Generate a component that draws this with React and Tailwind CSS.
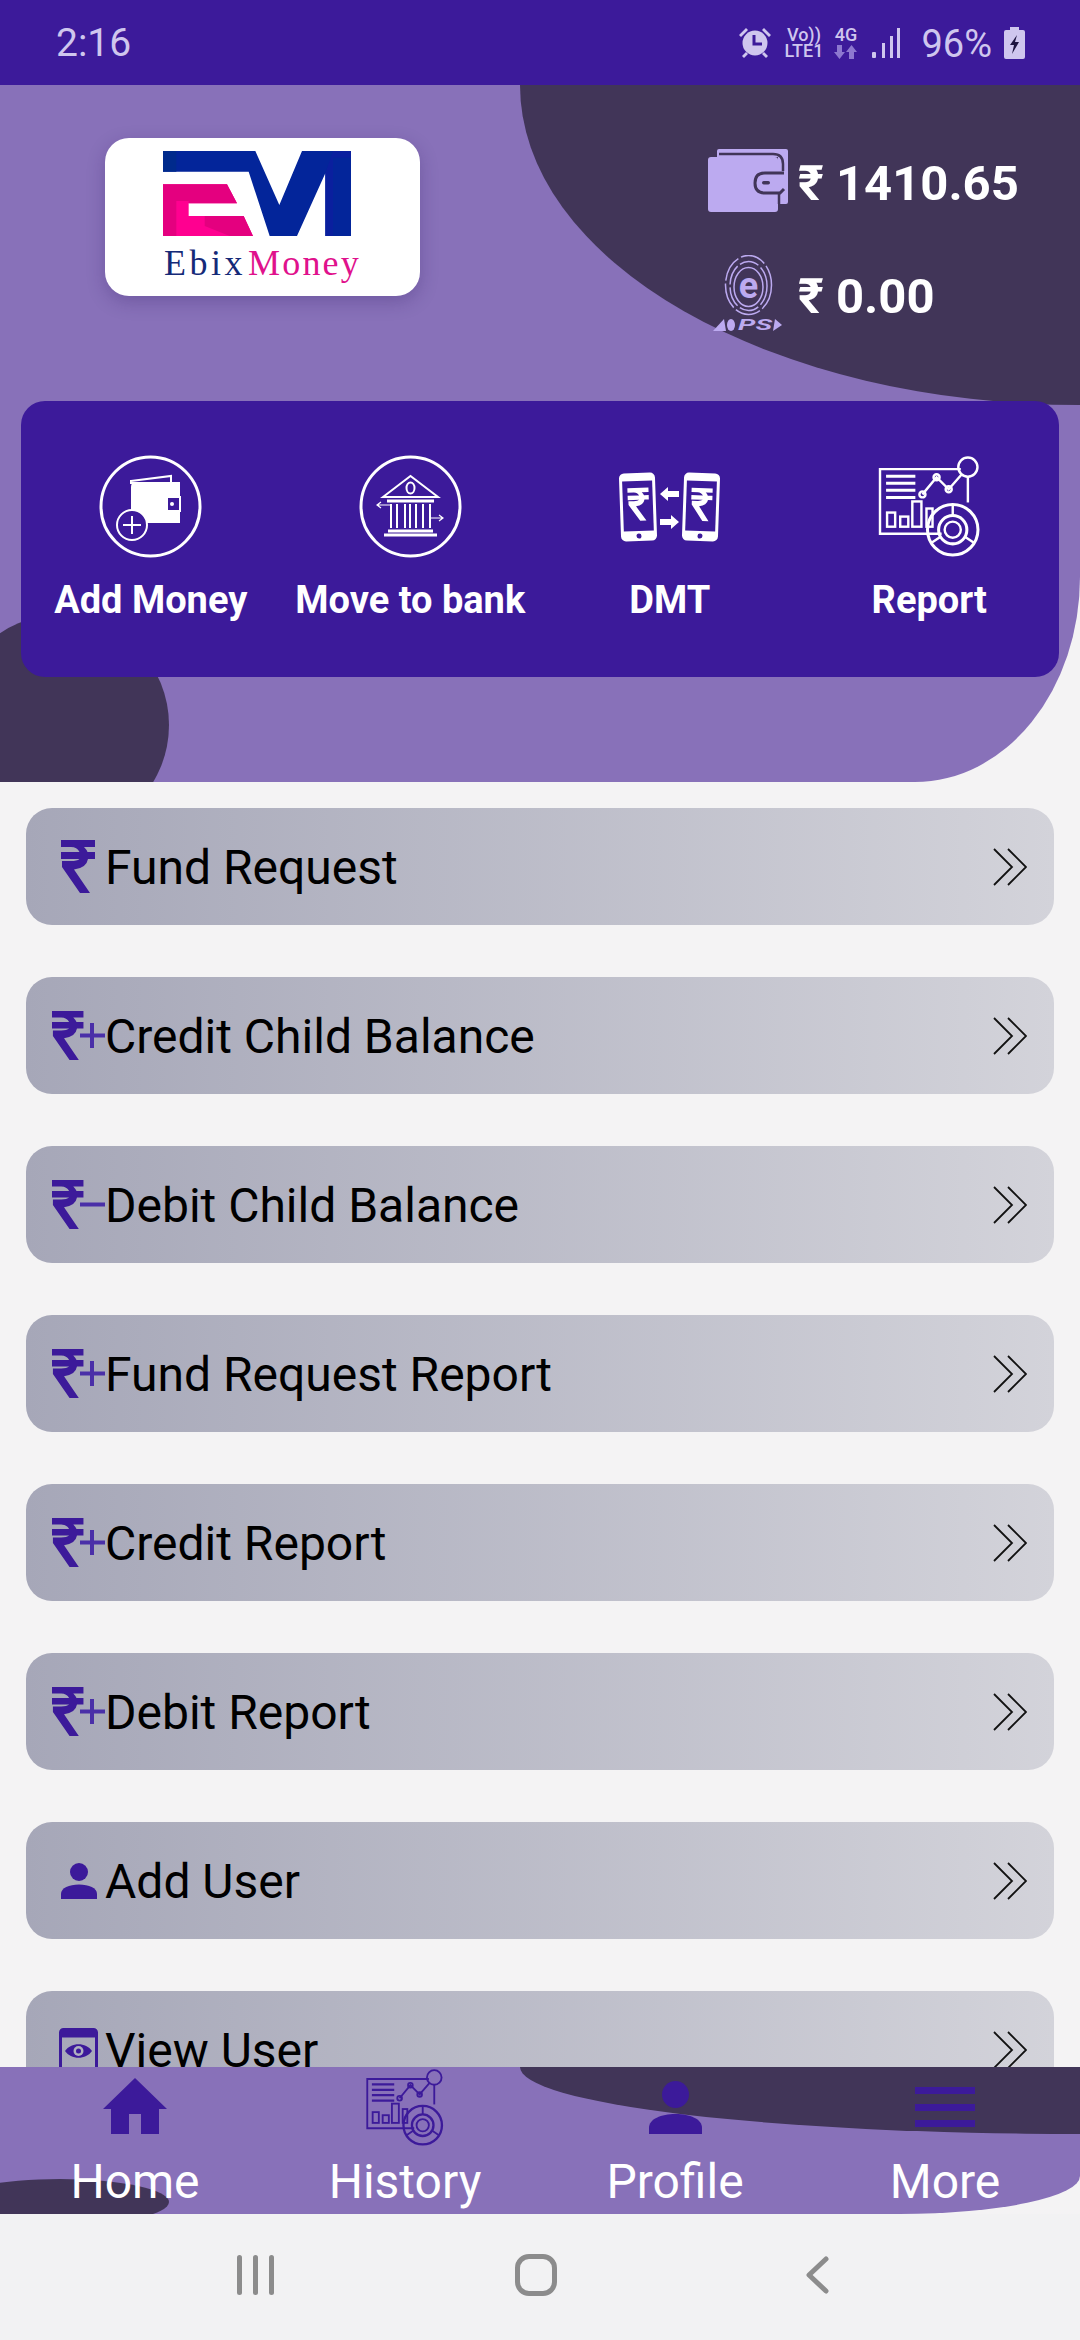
import React from "react";

const RUPEE = "M0 0H34V7H23Q25.5 9.5 26.5 12H34V19H27Q25.5 28 13 29.5L29 53H19L1 27V21H10Q16 21 18.5 19H0V12H18.5Q16 7 10 7H0Z";

const Rupee = ({ className }) => (
  <svg viewBox="0 0 34 53" className={className} fill="currentColor">
    <path d={RUPEE} />
  </svg>
);

const RupeeSign = ({ sign }) => (
  <svg viewBox="0 0 53 49" className="w-[53px] h-[49px] ml-[26px] text-[#3c1a9a]">
    <g transform="scale(0.925)" fill="currentColor">
      <path d={RUPEE} />
    </g>
    <path d="M28 24.5H53" stroke="#4a2fa8" strokeWidth="4" fill="none" />
    {sign === "+" && <path d="M40 12V37" stroke="#4a2fa8" strokeWidth="4" fill="none" />}
  </svg>
);

const FundIcon = () => (
  <div className="w-[81px] flex justify-end pr-[12px]">
    <Rupee className="w-[34px] h-[53px] text-[#3c1a9a]" />
  </div>
);

const SignIcon = ({ sign }) => (
  <div className="w-[81px]">
    <RupeeSign sign={sign} />
  </div>
);

const UserIcon = () => (
  <div className="w-[81px] flex justify-end pr-[10px]">
    <svg viewBox="0 0 36 36" className="w-[36px] h-[36px]" fill="#3c1a9a">
      <circle cx="18" cy="9" r="9" />
      <path d="M0 36V31C0 25 8 21.500 18 21.500S36 25 36 31V36Z" />
    </svg>
  </div>
);

const EyeIcon = () => (
  <div className="w-[81px] flex justify-end pr-[9px]">
    <svg viewBox="0 0 39 44" className="w-[39px] h-[44px]">
      <rect x="1.500" y="1.500" width="36" height="41" rx="3" fill="none" stroke="#3c1a9a" strokeWidth="3" />
      <rect x="1.500" y="1.500" width="36" height="8" rx="2" fill="#3c1a9a" />
      <path d="M6 23C12 14 27 14 33 23C27 32 12 32 6 23Z" fill="#3c1a9a" />
      <circle cx="19.500" cy="23" r="5" fill="#b0b1c0" />
      <circle cx="19.500" cy="23" r="2.500" fill="#3c1a9a" />
    </svg>
  </div>
);

const rows = [
  { label: "Fund Request", icon: <FundIcon /> },
  { label: "Credit Child Balance", icon: <SignIcon sign="+" /> },
  { label: "Debit Child Balance", icon: <SignIcon sign="-" /> },
  { label: "Fund Request Report", icon: <SignIcon sign="+" /> },
  { label: "Credit Report", icon: <SignIcon sign="+" /> },
  { label: "Debit Report", icon: <SignIcon sign="+" /> },
  { label: "Add User", icon: <UserIcon /> },
  { label: "View User", icon: <EyeIcon /> },
];

const DoubleChevron = () => (
  <svg viewBox="0 0 34 38" className="w-[34px] h-[38px] mr-[27px] shrink-0" fill="none" stroke="#111" strokeWidth="1.800">
    <path d="M1 1L19 19L1 37" />
    <path d="M15 1L33 19L15 37" />
  </svg>
);

const ReportIcon = ({ color, className }) => (
  <svg viewBox="0 0 100 100" className={className} fill="none" stroke={color} strokeWidth="2.400">
    <path d="M62 77H1V13H81" />
    <path d="M88 20V46" />
    <circle cx="88" cy="11" r="9.500" />
    <path d="M43 38L57 21L69 33L82 18" />
    <circle cx="43" cy="38" r="3" />
    <circle cx="57" cy="21" r="3" />
    <circle cx="69" cy="33" r="3" />
    <path d="M7 20H36M7 27H36M7 34H36M7 41H36" strokeWidth="3" />
    <rect x="8" y="56" width="8" height="14" />
    <rect x="21" y="60" width="8" height="10" />
    <rect x="33" y="45" width="9" height="25" />
    <rect x="47" y="52" width="6" height="18" />
    <circle cx="73" cy="73" r="25" strokeWidth="3" />
    <circle cx="73" cy="73" r="14" strokeWidth="3" />
    <circle cx="73" cy="73" r="8" />
    <path d="M73 48V59M52 86L61 80M94 86L85 80" />
  </svg>
);

const AddMoneyIcon = () => (
  <svg viewBox="0 0 103 103" className="w-[103px] h-[103px]">
    <circle cx="51.500" cy="51.500" r="49.500" fill="none" stroke="#fff" strokeWidth="3" />
    <path d="M32 26L72 21V28H32Z" fill="none" stroke="#fff" strokeWidth="2" />
    <path d="M32 32Q32 27 37 27H81V68H32Z" fill="#fff" />
    <rect x="68" y="42" width="13" height="14" fill="#3c1a9a" stroke="#fff" strokeWidth="2" />
    <circle cx="73" cy="49" r="2" fill="#fff" />
    <circle cx="33" cy="70" r="15" fill="#3c1a9a" stroke="#fff" strokeWidth="2" />
    <path d="M33 61V79M24 70H42" stroke="#fff" strokeWidth="2" />
  </svg>
);

const BankIcon = () => (
  <svg viewBox="0 0 103 103" className="w-[103px] h-[103px]" fill="none" stroke="#fff" strokeWidth="2">
    <circle cx="51.500" cy="51.500" r="49.500" strokeWidth="3" />
    <path d="M24 42L51.500 21L79 42Z" />
    <ellipse cx="51.500" cy="33" rx="4" ry="5.500" />
    <path d="M28 46H75" strokeWidth="3" />
    <path d="M32 49V73M38 49V73M46 49V73M51 49V73M57 49V73M64 49V73M71 49V73" />
    <path d="M29 76H74M25 80H78" strokeWidth="3" />
    <path d="M32 50H18M22 47L18 50L22 53" strokeWidth="1.200" />
    <path d="M70 63H84M80 60L84 63L80 66" strokeWidth="1.200" />
  </svg>
);

const Phone = ({ x, rotate }) => (
  <g transform={`translate(${x} 0) rotate(${rotate} 19 35)`}>
    <rect x="1" y="1" width="36" height="68" rx="5" fill="#fff" />
    <rect x="4" y="9" width="30" height="50" fill="#3c1a9a" />
    <circle cx="19" cy="64" r="2.500" fill="#3c1a9a" />
    <g transform="translate(9 16) scale(0.62)" fill="#fff">
      <path d={RUPEE} />
    </g>
  </g>
);

const DmtIcon = () => (
  <svg viewBox="0 0 102 70" className="w-[102px] h-[70px]">
    <Phone x={0} rotate={-2} />
    <Phone x={63} rotate={2} />
    <path d="M41 22L49 15V19H60V25H49V29Z" fill="#fff" />
    <path d="M60 50L52 43V47H41V53H52V57Z" fill="#fff" />
  </svg>
);

const actions = [
  { label: "Add Money", icon: <AddMoneyIcon /> },
  { label: "Move to bank", icon: <BankIcon /> },
  { label: "DMT", icon: <DmtIcon /> },
  { label: "Report", icon: <ReportIcon color="#fff" className="w-[103px] h-[101px]" /> },
];

const WalletIcon = () => (
  <svg viewBox="0 0 80 63" className="w-[80px] h-[63px] shrink-0">
    <path d="M9 2Q9 0 11 0H78Q80 0 80 2V53Q80 55 78 55H70V8H9Z" fill="#bcaaf0" />
    <path d="M0 11Q0 8 3 8H67Q70 8 70 11V60Q70 63 67 63H3Q0 63 0 60Z" fill="#bcaaf0" />
    <path d="M11 5H65Q75 5 75 15V22" fill="none" stroke="#413558" strokeWidth="2.500" />
    <path d="M79 24H57Q47 24 47 34T57 44H79Z" fill="#bcaaf0" />
    <path d="M76 24H57Q47 24 47 34T57 44H72L76 40" fill="none" stroke="#413558" strokeWidth="3" />
    <path d="M71 44V55" stroke="#413558" strokeWidth="2.500" />
    <rect x="54" y="32" width="8" height="3.500" rx="1.700" fill="#413558" />
  </svg>
);

const AepsIcon = () => (
  <svg viewBox="0 0 70 78" className="w-[70px] h-[78px]" fill="none" stroke="#bcaaf0">
    <ellipse cx="35.500" cy="30" rx="23" ry="29.500" strokeWidth="1.500" strokeDasharray="26 3" />
    <ellipse cx="35.500" cy="31" rx="18.500" ry="24.500" strokeWidth="1.500" strokeDasharray="20 3" />
    <ellipse cx="35.500" cy="32" rx="14.500" ry="19.500" strokeWidth="1.500" />
    <text x="35.500" y="43" textAnchor="middle" fontFamily="Roboto, sans-serif" fontSize="36" fontWeight="700" fill="#bcaaf0" stroke="none">e</text>
    <path d="M0 76L11 64L13 76Z" fill="#bcaaf0" stroke="none" />
    <ellipse cx="18" cy="70" rx="4" ry="6" fill="#bcaaf0" stroke="none" />
    <text x="25" y="74.500" textLength="34" lengthAdjust="spacingAndGlyphs" fontFamily="Roboto, sans-serif" fontSize="14" fontStyle="italic" fill="#bcaaf0" stroke="none">PS</text>
    <path d="M62 64L69 70L60 76Z" fill="#bcaaf0" stroke="none" />
  </svg>
);

const EbixLogo = () => (
  <div className="w-[315px] h-[158px] bg-white rounded-[24px] shadow-[0_6px_18px_rgba(40,20,90,0.25)] flex flex-col items-center shrink-0">
    <svg viewBox="0 0 564 255" className="w-[188px] h-[85px] mt-[13px] ml-[-12px]">
      <path d="M0 0H277L349 162L417 0H564V255H487V67L402 255H320L257 62H0Z" fill="#03259a" />
      <path d="M0 100H192L222 157H77V195H242L270 255H0Z" fill="#ff0090" />
      <path d="M0 100H192L222 157H77V150H40V255H0Z" fill="#e4007f" />
      <path d="M125 195H242L270 255H200L125 225Z" fill="#e4007f" />
      <path d="M0 0H40V62H0Z" fill="#002a8c" />
      <path d="M487 67L510 0H564V20H510V255H487Z" fill="#0a1f9e" />
    </svg>
    <p className="font-['Liberation_Serif',serif] text-[36px] leading-[40px] mt-[7px] whitespace-nowrap">
      <span className="text-[#152a78] tracking-[3.500px] mr-[2px]">Ebix</span>
      <span className="text-[#e0118c] tracking-[2.200px]">Money</span>
    </p>
  </div>
);

const StatusBar = () => (
  <div className="h-[85px] bg-[#3c1a9a] flex items-center shrink-0 text-[#cfc6ee] pl-[56px] pr-[55px]">
    <span className="text-[39px] leading-none mt-[2px]">2:16</span>
    <div className="ml-auto flex items-center">
      <svg viewBox="0 0 34 31" className="w-[34px] h-[31px]" fill="#cfc6ee">
        <circle cx="17" cy="16" r="12.500" />
        <path d="M1 8L8 1L10 3L3 10ZM33 8L26 1L24 3L31 10ZM4 29L8 25L10 27L6 31ZM30 29L26 25L24 27L28 31Z" />
        <path d="M16 8V17H24" fill="none" stroke="#3c1a9a" strokeWidth="3" />
      </svg>
      <div className="ml-[12px] w-[39px] flex flex-col items-center text-[18px] leading-[16px] font-medium">
        <span>Vo))</span>
        <span>LTE1</span>
      </div>
      <div className="ml-[11px] w-[23px] flex flex-col items-center">
        <span className="text-[18px] leading-[16px] font-medium">4G</span>
        <svg viewBox="0 0 23 14" className="w-[23px] h-[14px] mt-[2px]" fill="#8d78cf">
          <path d="M3 0H8V7H11L5.500 14L0 7H3ZM15 14H20V7H23L17.500 0L12 7H15Z" />
        </svg>
      </div>
      <svg viewBox="0 0 28 30" className="ml-[15px] w-[28px] h-[30px]" fill="#cfc6ee">
        <rect x="0" y="24" width="4" height="6" rx="1" />
        <rect x="10" y="15" width="3" height="15" />
        <rect x="18" y="8" width="3" height="22" />
        <rect x="25" y="0" width="3" height="30" />
      </svg>
      <span className="ml-[21px] text-[38px] leading-none mt-[2px]">96%</span>
      <svg viewBox="0 0 21 32" className="ml-[12px] w-[21px] h-[32px]">
        <path d="M6 0H15V3H19Q21 3 21 5V30Q21 32 19 32H2Q0 32 0 30V5Q0 3 2 3H6Z" fill="#cfc6ee" />
        <path d="M13 8L6 18H10L8 27L15 15H11Z" fill="#1d1440" />
      </svg>
    </div>
  </div>
);

const Header = () => (
  <div className="relative h-[697px] shrink-0 overflow-hidden bg-[#8871b9] rounded-br-[165px_205px]">
    <div className="absolute top-0 right-0 w-[560px] h-[320px] bg-[#413558] rounded-bl-[560px_320px]" />
    <div className="absolute left-[-49px] top-[530px] w-[218px] h-[220px] bg-[#413558] rounded-[50%]" />
    <div className="relative px-[21px]">
      <div className="h-[316px] flex">
        <div className="ml-[84px] mt-[53px]">
          <EbixLogo />
        </div>
        <div className="ml-auto w-[351px] pt-[64px] flex flex-col gap-[43px] text-white text-[49px] leading-none font-bold">
          <div className="flex items-center gap-[10px] h-[63px]">
            <WalletIcon />
            <span className="mt-[5px]">₹ 1410.65</span>
          </div>
          <div className="flex items-center gap-[10px] h-[78px]">
            <div className="w-[80px] flex justify-center">
              <AepsIcon />
            </div>
            <span className="mt-[5px]">₹ 0.00</span>
          </div>
        </div>
      </div>
      <div className="h-[276px] bg-[#3c1a9a] rounded-[24px] grid grid-cols-4 pt-[54px]">
        {actions.map((action) => (
          <div key={action.label} className="flex flex-col items-center">
            <div className="h-[103px] flex items-center justify-center">{action.icon}</div>
            <span className="mt-[20px] text-white text-[38px] leading-[44px] font-bold">{action.label}</span>
          </div>
        ))}
      </div>
    </div>
  </div>
);

const BottomNav = () => (
  <div className="relative h-[147px] shrink-0 bg-[#f4f3f4]">
    <div className="absolute inset-0 overflow-hidden bg-[#8871b9] rounded-br-[180px_38px]">
      <div className="absolute top-0 right-0 w-[560px] h-[67px] bg-[#413558] rounded-bl-[560px_67px]" />
      <div className="absolute left-[-49px] top-[112px] w-[218px] h-[46px] bg-[#413558] rounded-[50%]" />
    </div>
    <div className="relative h-full grid grid-cols-4 text-white text-[48px] leading-none">
      <div className="flex flex-col items-center">
        <div className="h-[80px] pt-[11px]">
          <svg viewBox="0 0 64 56" className="w-[64px] h-[56px]" fill="#3c1a9a">
            <path d="M32 0L64 31H56V56H38V36H26V56H8V31H0Z" />
          </svg>
        </div>
        <span className="mt-[11px]">Home</span>
      </div>
      <div className="flex flex-col items-center">
        <div className="h-[80px] pt-[2px]">
          <ReportIcon color="#3c1a9a" className="w-[78px] h-[77px]" />
        </div>
        <span className="mt-[11px]">History</span>
      </div>
      <div className="flex flex-col items-center">
        <div className="h-[80px] pt-[14px]">
          <svg viewBox="0 0 53 53" className="w-[53px] h-[53px]" fill="#3c1a9a">
            <circle cx="26.500" cy="13.500" r="13.500" />
            <path d="M0 53V47C0 38 12 33 26.500 33S53 38 53 47V53Z" />
          </svg>
        </div>
        <span className="mt-[11px]">Profile</span>
      </div>
      <div className="flex flex-col items-center">
        <div className="h-[80px] pt-[20px] flex flex-col">
          <span className="w-[60px] h-[7px] bg-[#3c1a9a]" />
          <span className="w-[60px] h-[7px] bg-[#3c1a9a] mt-[9.500px]" />
          <span className="w-[60px] h-[7px] bg-[#3c1a9a] mt-[9.500px]" />
        </div>
        <span className="mt-[11px]">More</span>
      </div>
    </div>
  </div>
);

const SystemNav = () => (
  <div className="h-[126px] shrink-0 bg-[#f2f2f3] grid grid-cols-3 items-center pb-[4px]">
    <div className="flex justify-end pr-[86px] gap-[11px]">
      <span className="w-[5px] h-[40px] rounded-full bg-[#8c8c8c]" />
      <span className="w-[5px] h-[40px] rounded-full bg-[#8c8c8c]" />
      <span className="w-[5px] h-[40px] rounded-full bg-[#8c8c8c]" />
    </div>
    <div className="flex justify-center pr-[8px]">
      <span className="w-[42px] h-[42px] rounded-[14px] border-[5px] border-[#8c8c8c]" />
    </div>
    <div className="flex pl-[86px]">
      <svg viewBox="0 0 23 38" className="w-[23px] h-[38px]" fill="none" stroke="#8c8c8c" strokeWidth="5" strokeLinecap="round" strokeLinejoin="round">
        <path d="M20 3L3 19L20 35" />
      </svg>
    </div>
  </div>
);

export default function App() {
  return (
    <div className="w-[1080px] h-[2340px] flex flex-col overflow-hidden bg-[#f4f3f4] font-[Roboto,sans-serif]">
      <StatusBar />
      <Header />
      <div className="flex-1 min-h-0 overflow-hidden px-[26px] pt-[26px] flex flex-col gap-[52px]">
        {rows.map((row) => (
          <div
            key={row.label}
            className="h-[117px] shrink-0 rounded-[26px] bg-linear-to-r from-[#a6a7b8] to-[#d3d3da] flex items-center"
          >
            {row.icon}
            <span className="flex-1 text-[48px] leading-none text-black -ml-[2px] mt-[3px]">{row.label}</span>
            <DoubleChevron />
          </div>
        ))}
      </div>
      <BottomNav />
      <SystemNav />
    </div>
  );
}
